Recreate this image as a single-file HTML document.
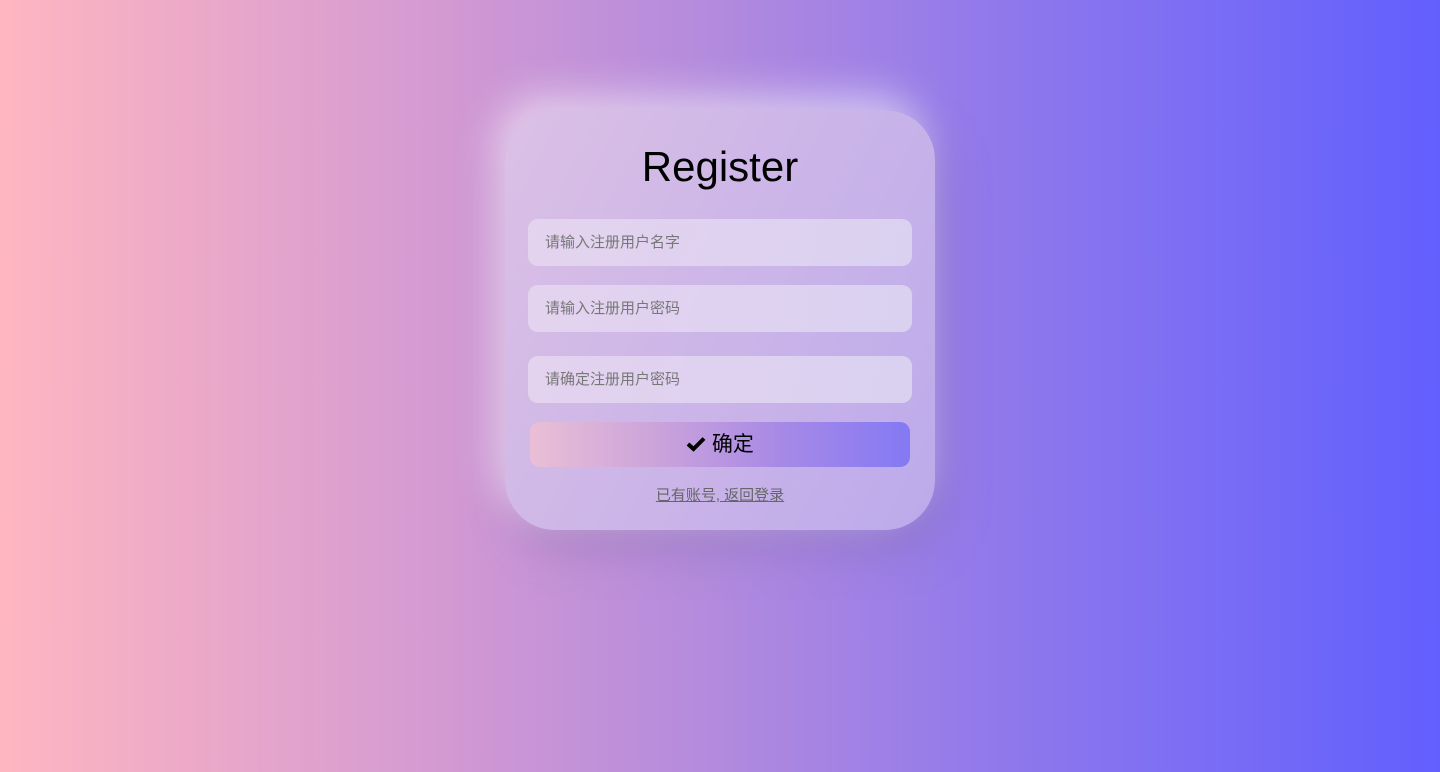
<!DOCTYPE html>
<html><head><meta charset="utf-8"><style>
*{margin:0;padding:0;box-sizing:border-box}
body{width:1440px;height:772px;overflow:hidden;background:linear-gradient(90deg,#ffb6c1 0%,#d49ad2 30%,#b28ade 50%,#8f78ec 70%,#625ffe 100%);font-family:"Liberation Sans","Noto Sans CJK SC",sans-serif;position:relative}
.card{position:absolute;left:505px;top:110px;width:430px;height:420px;border-radius:50px;background:linear-gradient(120deg,rgba(220,195,230,0.95),rgba(190,172,235,0.95));box-shadow:-10px -15px 40px rgba(255,255,255,0.55),10px 20px 45px rgba(120,100,160,0.35)}
h1{position:absolute;left:0;right:0;top:33px;text-align:center;font-weight:normal;font-size:42px;color:#000;font-family:"Liberation Sans",sans-serif}
.in{position:absolute;left:23px;width:384px;height:47px;border-radius:10px;background:linear-gradient(90deg,rgba(230,215,240,0.85),rgba(222,215,242,0.85));font-size:15px;color:#777;padding-left:17px;line-height:47px}
.btn{position:absolute;left:25px;top:312px;width:380px;height:45px;border-radius:10px;background:linear-gradient(90deg,#eabfd6 0%,#c9a2db 35%,#a88ae6 65%,#8479f4 100%);text-align:center;line-height:45px;font-size:21px;color:#000}
.lk{position:absolute;left:0;right:0;top:374px;text-align:center;font-size:15px;color:#666;text-decoration:underline}
</style></head><body>
<div class="card">
<h1>Register</h1>
<div class="in" style="top:109px">请输入注册用户名字</div>
<div class="in" style="top:175px">请输入注册用户密码</div>
<div class="in" style="top:246px">请确定注册用户密码</div>
<div class="btn"><svg width="20" height="16" viewBox="0 0 20 16" style="vertical-align:-1px"><path d="M2 8 L7.5 13 L18 2.5" stroke="#000" stroke-width="4" fill="none"/></svg> 确定</div>
<div class="lk">已有账号, 返回登录</div>
</div>
</body></html>
